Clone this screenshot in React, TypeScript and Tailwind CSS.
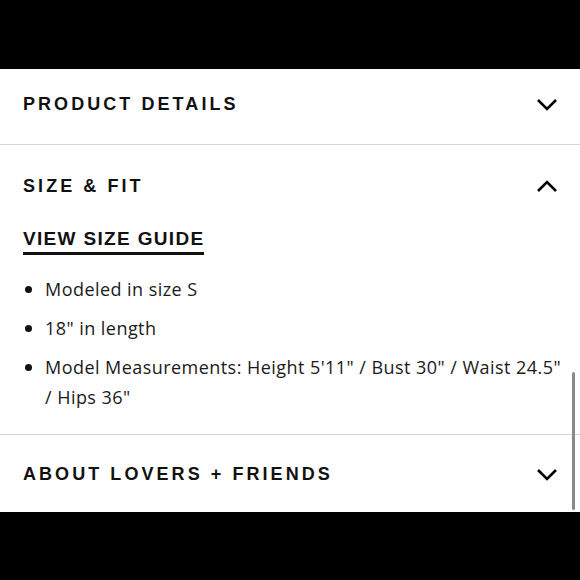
import React from "react";

const Chevron = ({ up = false }: { up?: boolean }) => (
  <svg width="22" height="14" viewBox="0 0 22 14" className="shrink-0">
    <path
      d={up ? "M2 12 L11 3 L20 12" : "M2 3 L11 12 L20 3"}
      fill="none"
      stroke="#000"
      strokeWidth="2.6"
    />
  </svg>
);

const Heading = ({ children }: { children: React.ReactNode }) => (
  <h2 className="font-['Liberation_Sans',sans-serif] text-[18px] font-bold tracking-[0.17em] text-[#111] leading-none">
    {children}
  </h2>
);

const items = [
  "Modeled in size S",
  '18" in length',
  'Model Measurements: Height 5\'11" / Bust 30" / Waist 24.5" / Hips 36"',
];

export default function App() {
  return (
    <div className="w-[580px] h-[580px] bg-black flex flex-col overflow-hidden">
      <div className="h-[69px] shrink-0" />
      <div className="relative flex-1 bg-white">
        <div className="flex items-center justify-between pl-[23px] pr-[22px] h-[76px] pb-[6px] border-b border-[#d6d6d6]">
          <Heading>PRODUCT DETAILS</Heading>
          <Chevron />
        </div>
        <div className="border-b border-[#d6d6d6] pl-[23px] pr-[22px] pb-[22px]">
          <div className="flex items-center justify-between h-[82px]">
            <Heading>SIZE &amp; FIT</Heading>
            <Chevron up />
          </div>
          <a className="inline-block font-['Liberation_Sans',sans-serif] text-[19px] font-bold tracking-[0.07em] text-[#111] leading-none border-b-[3px] border-[#111] pb-[4px] mt-[1px]">
            VIEW SIZE GUIDE
          </a>
          <ul className="mt-[19px] mr-[-9px] flex flex-col gap-[9px] font-['Open_Sans',sans-serif] text-[18px] tracking-[0.025em] text-[#1a1a1a] leading-[30px]">
            {items.map((t) => (
              <li key={t} className="flex">
                <span className="w-[22px] shrink-0 flex justify-start pl-[2px] pt-[12px]">
                  <span className="block w-[7px] h-[7px] rounded-full bg-[#111]" />
                </span>
                <span>{t}</span>
              </li>
            ))}
          </ul>
        </div>
        <div className="flex items-center justify-between pl-[23px] pr-[22px] h-[77px]">
          <Heading>ABOUT LOVERS + FRIENDS</Heading>
          <Chevron />
        </div>
        <div className="absolute right-[5px] top-[303px] w-[3px] h-[138px] rounded-full bg-[#8a8a8a]" />
      </div>
      <div className="h-[69px] shrink-0" />
    </div>
  );
}
